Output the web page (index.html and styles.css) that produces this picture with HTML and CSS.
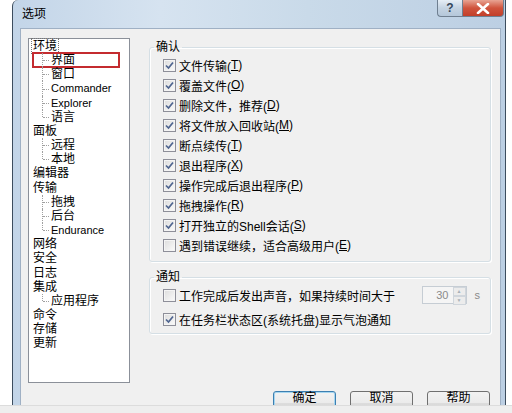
FILE: index.html
```html
<!DOCTYPE html>
<html lang="zh-CN">
<head>
  <meta charset="UTF-8">
  <title>选项</title>
  <link rel="stylesheet" href="styles.css">
</head>
<body>

  <div class="window">
    <div class="titlebar">
      <span class="title">选项</span>
      <span class="cap help">?</span>
      <span class="cap close">
        <svg width="14" height="11" viewBox="0 0 14 11"><path d="M2 1 L12 10 M12 1 L2 10" stroke="#fff" stroke-width="2.6" stroke-linecap="round"/></svg>
      </span>
    </div>

    <div class="client">
      <div class="top">
        <div class="tree">
          <ul>
            <li><span class="focus">环境</span>
              <ul class="sub">
                <li class="marked">界面</li>
                <li>窗口</li>
                <li class="en">Commander</li>
                <li class="en">Explorer</li>
                <li>语言</li>
              </ul>
            </li>
            <li>面板
              <ul class="sub">
                <li>远程</li>
                <li>本地</li>
              </ul>
            </li>
            <li>编辑器</li>
            <li>传输
              <ul class="sub">
                <li>拖拽</li>
                <li>后台</li>
                <li class="en">Endurance</li>
              </ul>
            </li>
            <li>网络</li>
            <li>安全</li>
            <li>日志</li>
            <li>集成
              <ul class="sub">
                <li>应用程序</li>
              </ul>
            </li>
            <li>命令</li>
            <li>存储</li>
            <li>更新</li>
          </ul>
        </div>

        <div class="panel">
          <fieldset class="group">
            <legend>确认</legend>
            <div class="row"><span class="cb on"></span>文件传输(<u>T</u>)</div>
            <div class="row"><span class="cb on"></span>覆盖文件(<u>O</u>)</div>
            <div class="row"><span class="cb on"></span>删除文件，推荐(<u>D</u>)</div>
            <div class="row"><span class="cb on"></span>将文件放入回收站(<u>M</u>)</div>
            <div class="row"><span class="cb on"></span>断点续传(<u>T</u>)</div>
            <div class="row"><span class="cb on"></span>退出程序(<u>X</u>)</div>
            <div class="row"><span class="cb on"></span>操作完成后退出程序(<u>P</u>)</div>
            <div class="row"><span class="cb on"></span>拖拽操作(<u>R</u>)</div>
            <div class="row"><span class="cb on"></span>打开独立的Shell会话(<u>S</u>)</div>
            <div class="row"><span class="cb"></span>遇到错误继续，适合高级用户(<u>E</u>)</div>
          </fieldset>

          <fieldset class="group notify">
            <legend>通知</legend>
            <div class="row"><span class="cb"></span>工作完成后发出声音，如果持续时间大于
              <span class="spin"><span class="val">30</span><span class="arrows"><i>▲</i><i>▼</i></span></span>
              <span class="unit">s</span>
            </div>
            <div class="row"><span class="cb on"></span>在任务栏状态区(系统托盘)显示气泡通知</div>
          </fieldset>
        </div>
      </div>

      <div class="buttons">
        <button class="default">确定</button>
        <button>取消</button>
        <button>帮助</button>
      </div>
    </div>
  </div>
  <div class="strip"></div>

</body>
</html>
```

FILE: styles.css
```css
body {
  margin: 0;
  width: 512px;
  height: 413px;
  overflow: hidden;
  background: #fff;
  display: flex;
  flex-direction: column;
  font-family: "Liberation Sans", "Noto Sans CJK SC", sans-serif;
  font-size: 12px;
  color: #000;
}
.window {
  margin-left: 12px;
  width: 494px;
  height: 405px;
  box-sizing: border-box;
  flex: none;
  display: flex;
  flex-direction: column;
  padding: 0 4px 0 7px;
  border-left: 1px solid #3d4d5e;
  border-right: 1px solid #3d4d5e;
  border-top-left-radius: 6px;
  background: linear-gradient(90deg, #c3d5e8 0%, #d6e3f0 30%, #c9dae9 60%, #bccfe3 100%);
  overflow: hidden;
}
.titlebar {
  height: 28px;
  flex: none;
  display: flex;
  align-items: flex-start;
  margin-right: -3px;
}
.title {
  padding: 6px 0 0 2px;
  line-height: 16px;
}
.cap {
  height: 17px;
  display: flex;
  align-items: center;
  justify-content: center;
  box-sizing: border-box;
  border: 1px solid #6f7f90;
  border-top: none;
}
.help {
  margin-left: auto;
  width: 25px;
  border-right: none;
  border-bottom-left-radius: 4px;
  background: linear-gradient(#e6eef6, #c4d3e2 50%, #b5c7da);
  color: #34465a;
  font-weight: bold;
}
.close {
  width: 42px;
  border-bottom-right-radius: 4px;
  background: linear-gradient(#e8a493, #d0543d 50%, #c23f2a);
}
.client {
  flex: 1;
  display: flex;
  flex-direction: column;
  background: #f0f0f0;
  border: 1px solid #9fb0c4;
  border-bottom: none;
  overflow: hidden;
}
.top {
  display: flex;
  padding: 9px 0 0 7px;
}

/* tree */
.tree {
  width: 102px;
  height: 345px;
  box-sizing: border-box;
  flex: none;
  background: #fff;
  border: 1px solid #8b9099;
  padding: 0 0 0 4px;
  line-height: 14.15px;
}
.tree ul {
  list-style: none;
  margin: 0;
  padding: 0;
}
.tree .sub li {
  position: relative;
  padding-left: 18px;
}
.tree .sub li::before {
  content: '';
  position: absolute;
  left: 9px;
  top: 0;
  height: 100%;
  border-left: 1px dotted #a0a0a0;
}
.tree .sub li:last-child::before {
  height: 50%;
}
.tree .sub li::after {
  content: '';
  position: absolute;
  left: 10px;
  top: 50%;
  width: 6px;
  border-top: 1px dotted #a0a0a0;
}
.tree .en {
  font-size: 11px;
}
.focus {
  outline: 1px dotted #777;
  padding: 0 1px;
  margin-left: -1px;
}
.tree .sub li.marked {
  outline: 2px solid #c42b2f;
  outline-offset: -1px;
  margin-right: 10px;
}

/* right panel */
.panel {
  flex: 1;
  margin: 0 9px 0 19px;
}
.group {
  margin: 1px 0 0;
  padding: 0 0 6px 4px;
  border: 1px solid #d5dfe5;
  border-radius: 3px;
  box-shadow: inset 1px 1px 0 #fff, 1px 1px 0 #fff;
}
.group legend {
  padding: 0 2px;
  line-height: 16px;
}
.row {
  height: 20px;
  display: flex;
  align-items: center;
  padding-left: 9px;
  white-space: nowrap;
}
.cb {
  width: 13px;
  height: 13px;
  box-sizing: border-box;
  flex: none;
  margin-right: 3px;
  border: 1px solid #8e8f99;
  background: linear-gradient(135deg, #dcdcdc, #fbfbfb);
  box-shadow: inset 0 0 0 1px #f4f4f4;
}
.cb.on {
  background: url("data:image/svg+xml,%3Csvg xmlns='http://www.w3.org/2000/svg' width='11' height='11'%3E%3Cpath d='M2 5.5 L4.5 8 L9 2.5' fill='none' stroke='%234f6590' stroke-width='1.7'/%3E%3C/svg%3E") center no-repeat, linear-gradient(135deg, #dcdcdc, #fbfbfb);
}
.notify {
  margin-top: 7px;
  padding-bottom: 4px;
}
.notify .row + .row {
  margin-top: 4px;
}
.spin {
  margin-left: auto;
  width: 45px;
  height: 18px;
  box-sizing: border-box;
  display: flex;
  border: 1px solid #c6cdd4;
  background: #f5f5f5;
  color: #8a8a8a;
  font-size: 11px;
}
.spin .val {
  flex: 1;
  text-align: right;
  padding-right: 4px;
  line-height: 16px;
}
.spin .arrows {
  width: 13px;
  display: flex;
  flex-direction: column;
}
.spin i {
  flex: 1;
  font-style: normal;
  font-size: 5px;
  line-height: 7px;
  text-align: center;
  color: #a8b0b8;
  border: 1px solid #d0d6dc;
  background: #ececec;
}
.unit {
  margin: 0 10px 0 8px;
  color: #8a8a8a;
  font-size: 11px;
}

/* dialog buttons */
.buttons {
  display: flex;
  justify-content: flex-end;
  gap: 14px;
  padding-right: 10px;
  margin-top: 8px;
}
.buttons button {
  width: 63px;
  height: 23px;
  font: inherit;
  line-height: 12px;
  border: 1px solid #707070;
  border-radius: 3px;
  background: linear-gradient(#f2f2f2, #ebebeb 50%, #dddddd 51%, #cfcfcf);
  padding: 0 0 9px;
}
.buttons .default {
  border-color: #3c7fb1;
  box-shadow: inset 0 0 0 1px #a6d6f0;
}
.strip {
  flex: 1;
  background: #eeeeee;
  border-top: 1px solid #dcdcdc;
}
```
